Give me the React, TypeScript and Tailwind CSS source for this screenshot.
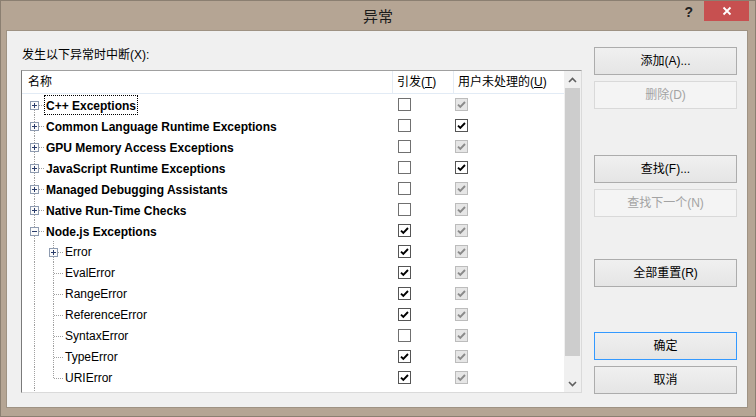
import React from 'react'

type CheckState = 'off' | 'on' | 'dis'

interface Row {
  name: string
  level: 0 | 1
  box?: '+' | '-'
  first?: boolean
  last?: boolean
  focus?: boolean
  t: CheckState
  u: CheckState
}

const rows: Row[] = [
  { name: 'C++ Exceptions', level: 0, box: '+', first: true, focus: true, t: 'off', u: 'dis' },
  { name: 'Common Language Runtime Exceptions', level: 0, box: '+', t: 'off', u: 'on' },
  { name: 'GPU Memory Access Exceptions', level: 0, box: '+', t: 'off', u: 'dis' },
  { name: 'JavaScript Runtime Exceptions', level: 0, box: '+', t: 'off', u: 'on' },
  { name: 'Managed Debugging Assistants', level: 0, box: '+', t: 'off', u: 'dis' },
  { name: 'Native Run-Time Checks', level: 0, box: '+', t: 'off', u: 'dis' },
  { name: 'Node.js Exceptions', level: 0, box: '-', t: 'on', u: 'dis' },
  { name: 'Error', level: 1, box: '+', t: 'on', u: 'dis' },
  { name: 'EvalError', level: 1, t: 'on', u: 'dis' },
  { name: 'RangeError', level: 1, t: 'on', u: 'dis' },
  { name: 'ReferenceError', level: 1, t: 'on', u: 'dis' },
  { name: 'SyntaxError', level: 1, t: 'off', u: 'dis' },
  { name: 'TypeError', level: 1, t: 'on', u: 'dis' },
  { name: 'URIError', level: 1, last: true, t: 'on', u: 'dis' },
]

const DOT = '#a0a0a0'

function ExpandBox({ x, sign }: { x: number; sign: '+' | '-' }) {
  return (
    <g>
      <rect x={x + 0.5} y={7.5} width={8} height={8} fill="#fbfbfb" stroke="#8e9bb0" />
      <line x1={x + 2} y1={11.5} x2={x + 7} y2={11.5} stroke="#2b3d6b" />
      {sign === '+' && <line x1={x + 4.5} y1={9} x2={x + 4.5} y2={14} stroke="#2b3d6b" />}
    </g>
  )
}

function Gutter({ row }: { row?: Row }) {
  // empty row at the bottom: only the top-level line continues
  if (!row) {
    return (
      <svg width={24} height={21} className="shrink-0">
        <line x1={12.5} y1={0} x2={12.5} y2={21} stroke={DOT} strokeDasharray="1 1" />
      </svg>
    )
  }
  if (row.level === 0) {
    return (
      <svg width={24} height={21} className="shrink-0">
        {!row.first && <line x1={12.5} y1={0} x2={12.5} y2={7} stroke={DOT} strokeDasharray="1 1" />}
        <line x1={12.5} y1={16} x2={12.5} y2={21} stroke={DOT} strokeDasharray="1 1" />
        <line x1={17} y1={11.5} x2={23} y2={11.5} stroke={DOT} strokeDasharray="1 1" />
        <ExpandBox x={8} sign={row.box ?? '+'} />
      </svg>
    )
  }
  return (
    <svg width={43} height={21} className="shrink-0">
      <line x1={12.5} y1={0} x2={12.5} y2={21} stroke={DOT} strokeDasharray="1 1" />
      {row.box ? (
        <>
          <line x1={31.5} y1={0} x2={31.5} y2={7} stroke={DOT} strokeDasharray="1 1" />
          <line x1={31.5} y1={16} x2={31.5} y2={21} stroke={DOT} strokeDasharray="1 1" />
          <line x1={36} y1={11.5} x2={42} y2={11.5} stroke={DOT} strokeDasharray="1 1" />
          <ExpandBox x={27} sign={row.box} />
        </>
      ) : (
        <>
          <line x1={31.5} y1={0} x2={31.5} y2={row.last ? 12 : 21} stroke={DOT} strokeDasharray="1 1" />
          <line x1={32} y1={11.5} x2={42} y2={11.5} stroke={DOT} strokeDasharray="1 1" />
        </>
      )}
    </svg>
  )
}

function Check({ state }: { state: CheckState }) {
  const cls =
    state === 'dis'
      ? 'border-[#bcbcbc] bg-[#e6e6e6]'
      : state === 'on'
        ? 'border-[#555555] bg-white'
        : 'border-[#707070] bg-white'
  return (
    <div className={`w-[13px] h-[13px] border flex items-center justify-center ${cls}`}>
      {state !== 'off' && (
        <svg width={11} height={11} viewBox="0 0 11 11">
          <path
            d="M2 5.6l2.3 2.3L9 3"
            fill="none"
            stroke={state === 'on' ? '#000000' : '#8a8a8a'}
            strokeWidth={1.9}
          />
        </svg>
      )}
    </div>
  )
}

function Btn({ label, disabled, primary }: { label: string; disabled?: boolean; primary?: boolean }) {
  const cls = disabled
    ? 'border-[#d9d9d9] bg-[#f4f4f4] text-[#a3a3a3]'
    : primary
      ? 'border-[#3399ff] bg-gradient-to-b from-[#f0f0f0] to-[#e5e5e5] text-black'
      : 'border-[#acacac] bg-gradient-to-b from-[#f0f0f0] to-[#e5e5e5] text-black'
  return (
    <div className={`w-[143px] h-[28px] border flex items-center justify-center text-[12px] ${cls}`}>
      {label}
    </div>
  )
}

export default function App() {
  return (
    <div className="w-[756px] h-[417px] box-border border border-[#8b7f71] bg-[#b5a594] flex flex-col font-['Liberation_Sans','Noto_Sans_CJK_SC',sans-serif] select-none">
      {/* Title bar */}
      <div className="h-[29px] grid grid-cols-[1fr_auto_1fr] shrink-0">
        <div />
        <div className="text-[15px] leading-[29px] text-[#1a1a1a] font-['Noto_Sans_CJK_SC',sans-serif]">异常</div>
        <div className="flex justify-end items-start pr-[6px]">
          <span className="mt-[3px] mr-[11px] text-[14px] font-bold text-[#222] leading-[16px]">?</span>
          <div className="w-[45px] h-[20px] bg-[#c75050] flex items-center justify-center">
            <svg width={10} height={10} viewBox="0 0 10 10">
              <path d="M1.5 1.5l7 7M8.5 1.5l-7 7" stroke="#ffffff" strokeWidth={1.8} />
            </svg>
          </div>
        </div>
      </div>

      {/* Client area */}
      <div className="ml-[5px] mr-[7px] h-[378px] box-border border border-[#9e9283] bg-[#f0f0f0] flex">
        {/* Left column */}
        <div className="pl-[14px] pt-[15px] flex flex-col">
          <div className="ml-[1px] h-[18px] leading-[18px] text-[12px] text-black">发生以下异常时中断(X):</div>
          <div className="mt-[6px] w-[561px] h-[323px] box-border border-l border-t border-l-[#7a7a7a] border-t-[#a0a0a0] border-r border-b border-r-[#dadada] border-b-[#dadada] bg-white flex overflow-hidden">
            <div className="flex-1 flex flex-col text-[12px] text-black">
              {/* Header */}
              <div className="h-[23px] shrink-0 flex border-b border-[#e2ebf5]">
                <div className="w-[371px] border-r border-[#e5ecf4] pl-[6px] pt-[1px] leading-[21px]">名称</div>
                <div className="w-[61px] border-r border-[#e5ecf4] pl-[4px] pt-[1px] leading-[21px]">
                  引发(<span className="underline">T</span>)
                </div>
                <div className="flex-1 pl-[4px] pt-[1px] leading-[21px]">
                  用户未处理的(<span className="underline">U</span>)
                </div>
              </div>
              {/* Rows */}
              <div className="flex-1 overflow-hidden">
                {rows.map((r) => (
                  <div key={r.name} className="h-[21px] flex items-center">
                    <div className="w-[371px] h-full flex items-start">
                      <Gutter row={r} />
                      {r.level === 0 ? (
                        <span
                          className={`font-bold ml-[-2px] mt-[1px] px-[1px] h-[20px] leading-[20px] border border-dotted ${
                            r.focus ? 'border-black' : 'border-transparent'
                          }`}
                        >
                          {r.name}
                        </span>
                      ) : (
                        <span className="mt-[1px] leading-[21px]">{r.name}</span>
                      )}
                    </div>
                    <div className="w-[61px] pl-[5px]">
                      <Check state={r.t} />
                    </div>
                    <div className="flex-1 pl-[1px]">
                      <Check state={r.u} />
                    </div>
                  </div>
                ))}
                <div className="h-[21px] flex">
                  <Gutter />
                </div>
              </div>
            </div>
            {/* Scrollbar */}
            <div className="w-[17px] bg-[#f0f0f0] flex flex-col shrink-0">
              <div className="h-[17px] flex items-center justify-center">
                <svg width={9} height={6} viewBox="0 0 9 6">
                  <path d="M1 5l3.5-3.5L8 5" fill="none" stroke="#606060" strokeWidth={1.6} />
                </svg>
              </div>
              <div className="h-[268px] mx-[1px] bg-[#cdcdcd]" />
              <div className="flex-1" />
              <div className="h-[17px] flex items-center justify-center">
                <svg width={9} height={6} viewBox="0 0 9 6">
                  <path d="M1 1l3.5 3.5L8 1" fill="none" stroke="#606060" strokeWidth={1.6} />
                </svg>
              </div>
            </div>
          </div>
        </div>

        {/* Right column buttons */}
        <div className="ml-[12px] pt-[16px] flex flex-col">
          <Btn label="添加(A)..." />
          <div className="mt-[6px]">
            <Btn label="删除(D)" disabled />
          </div>
          <div className="mt-[46px]">
            <Btn label="查找(F)..." />
          </div>
          <div className="mt-[6px]">
            <Btn label="查找下一个(N)" disabled />
          </div>
          <div className="mt-[42px]">
            <Btn label="全部重置(R)" />
          </div>
          <div className="mt-[45px]">
            <Btn label="确定" primary />
          </div>
          <div className="mt-[6px]">
            <Btn label="取消" />
          </div>
        </div>
      </div>
    </div>
  )
}
